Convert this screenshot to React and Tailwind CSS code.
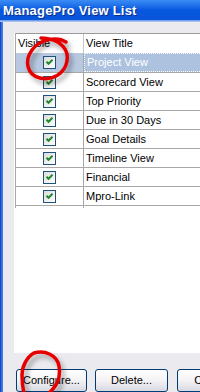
import React from "react";

const rows = [
  "Project View",
  "Scorecard View",
  "Top Priority",
  "Due in 30 Days",
  "Goal Details",
  "Timeline View",
  "Financial",
  "Mpro-Link",
];

function Check() {
  return (
    <div className="w-[13px] h-[13px] border border-[#1c5180] bg-gradient-to-br from-[#dcdcd7] to-white flex items-center justify-center">
      <svg width="11" height="11" viewBox="0 0 11 11">
        <path d="M2.5 4.8 L4.5 6.8 L8.5 2.8" stroke="#21892a" strokeWidth="2" fill="none" />
      </svg>
    </div>
  );
}

function Btn({ children, w }) {
  return (
    <div
      className={`${w} h-[23px] shrink-0 border border-[#003c74] rounded-[3px] bg-gradient-to-b from-white via-[#f3f3f5] to-[#d8d8e2] flex items-center justify-center text-[11px] text-black whitespace-nowrap`}
    >
      {children}
    </div>
  );
}

export default function App() {
  return (
    <div className="relative w-[200px] h-[392px] overflow-hidden bg-[#ebebef] flex flex-col font-['Liberation_Sans',Arial,sans-serif]">
      <div className="h-[20px] shrink-0 bg-gradient-to-b from-[#3b8cf5] via-[#0758e0] to-[#0a55d8] flex items-end pl-[3px] pb-[3px]">
        <span className="text-white font-bold text-[13px] leading-none tracking-[0.2px] [text-shadow:1px_1px_0_#0a2f8f]">
          ManagePro View List
        </span>
      </div>
      <div className="h-[2px] shrink-0 bg-gradient-to-b from-[#5a8ee8] to-[#c4d2ee]" />
      <div className="flex flex-1 min-h-0">
        <div className="w-[3px] shrink-0 bg-gradient-to-r from-[#0a3fb7] via-[#2f6ae0] to-[#4d84e6]" />
        <div className="flex-1 flex flex-col pl-[11px] pt-[11px]">
          <div className="h-[320px] w-[200px] bg-white pl-[1px] flex flex-col">
            <div className="border-l border-[#a8a8a8] flex flex-col text-[11px] text-black">
              <div className="h-[20px] flex border-t border-[#9a9a9a]">
                <div className="w-[68px] border-r border-[#c8c8c8] pl-[2px] flex items-center">Visible</div>
                <div className="flex-1 pl-[2px] flex items-center">View Title</div>
              </div>
              {rows.map((r, i) => (
                <div
                  key={r}
                  className={`${i === 0 ? "h-[20px] bg-[#b7c8e0]" : "h-[19px]"} flex border-b border-[#a8a8a8]`}
                >
                  <div className="w-[68px] border-r border-[#a8a8a8] flex items-center justify-center">
                    <Check />
                  </div>
                  <div
                    className={`flex-1 flex items-center pl-[2px] ${
                      i === 0 ? "bg-[#adc2df] text-white border border-dotted border-white pl-[1px]" : ""
                    }`}
                  >
                    {r}
                  </div>
                </div>
              ))}
              <div className="h-[2px] flex">
                <div className="w-[68px] border-r border-[#a8a8a8]" />
              </div>
            </div>
          </div>
          <div className="flex mt-[16px] pl-[2px]">
            <Btn w="w-[71px]">Configure...</Btn>
            <div className="w-[8px] shrink-0" />
            <Btn w="w-[73px]">Delete...</Btn>
            <div className="w-[9px] shrink-0" />
            <Btn w="w-[72px]">Close...</Btn>
          </div>
        </div>
      </div>
      <svg className="absolute inset-0 pointer-events-none" width="200" height="392">
        <defs>
          <filter id="sh" x="-30%" y="-30%" width="170%" height="170%">
            <feGaussianBlur in="SourceAlpha" stdDeviation="2.5" />
            <feOffset dx="3" dy="4" result="b" />
            <feComponentTransfer>
              <feFuncA type="linear" slope="0.35" />
            </feComponentTransfer>
            <feMerge>
              <feMergeNode />
              <feMergeNode in="SourceGraphic" />
            </feMerge>
          </filter>
        </defs>
        <path
          d="M66 42 C57 36 40 39 32 50 C24 61 27 75 40 78 C53 81 65 73 67 61 C69 50 61 41 49 39 C46 38.5 43 38 41 38"
          stroke="#e50000"
          strokeWidth="3.5"
          fill="none"
          strokeLinecap="round"
          filter="url(#sh)"
        />
        <path
          d="M48 394 C57 386 61 378 59 366 C57 355 45 350 34 353 C27 357 22 366 22 375 C22 383 23 389 24 394"
          stroke="#e50000"
          strokeWidth="3.5"
          fill="none"
          strokeLinecap="round"
          filter="url(#sh)"
        />
      </svg>
    </div>
  );
}
